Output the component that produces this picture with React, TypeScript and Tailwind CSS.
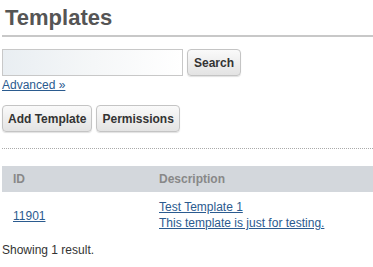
export default function App() {
  const btn =
    'h-[27px] px-[5px] rounded-[4px] border border-[#c4c4c4] bg-gradient-to-b from-[#fafafa] to-[#e3e3e3] text-[12px] font-bold text-[#333] shadow-[0_1px_1px_rgba(0,0,0,0.12)]'

  return (
    <div className="w-[373px] h-[267px] bg-white font-['Liberation_Sans',Arial,sans-serif] text-[12px] text-[#333] pl-[2px] overflow-hidden">
      {/* Header */}
      <h1 className="pt-[5px] pl-[3px] text-[22px] leading-[26px] font-bold text-[#555]">Templates</h1>
      <div className="mt-[4px] border-b-2 border-[#c8c8c8]" />

      {/* Search */}
      <div className="mt-[12px] flex items-center gap-[4px]">
        <input
          type="text"
          className="w-[181px] h-[27px] border border-[#c8c8c8] bg-gradient-to-r from-[#e9eef2] via-[#f5f7f8] to-white outline-none"
        />
        <button type="button" className={`${btn} w-[54px]`}>
          Search
        </button>
      </div>
      <a href="#" className="block mt-[2px] text-[12px] leading-[14px] text-[#2b5b8f] underline">
        Advanced »
      </a>

      {/* Actions */}
      <div className="mt-[13px] flex gap-[4px]">
        <button type="button" className={btn}>
          Add Template
        </button>
        <button type="button" className={btn}>
          Permissions
        </button>
      </div>
      <div className="mt-[16px] border-b border-dotted border-[#aaa]" />

      {/* Table */}
      <table className="mt-[17px] w-[371px] border-collapse">
        <thead>
          <tr className="bg-[#d3d7dc] h-[26px]">
            <th className="pl-[11px] w-[157px] text-left font-bold text-[#888]">ID</th>
            <th className="text-left font-bold text-[#888]">Description</th>
          </tr>
        </thead>
        <tbody>
          <tr>
            <td className="pl-[11px] pt-[8px] align-middle">
              <a href="#" className="text-[#2b5b8f] underline">11901</a>
            </td>
            <td className="pt-[7px] leading-[16px]">
              <a href="#" className="block text-[#2b5b8f] underline">Test Template 1</a>
              <a href="#" className="block text-[#2b5b8f] underline">This template is just for testing.</a>
            </td>
          </tr>
        </tbody>
      </table>
      <p className="mt-[10px] text-[#333]">Showing 1 result.</p>
    </div>
  )
}
